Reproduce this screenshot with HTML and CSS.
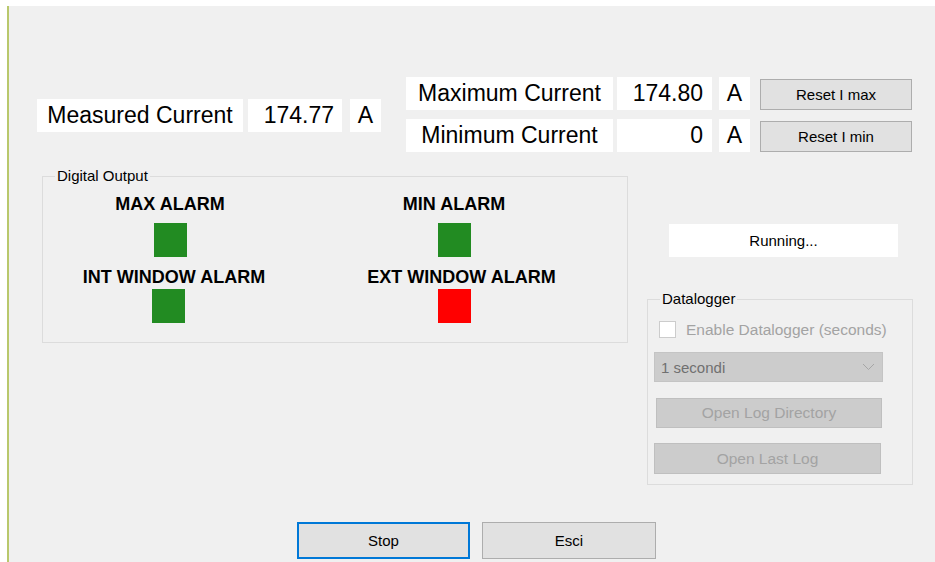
FILE: index.html
```html
<!DOCTYPE html>
<html lang="en">
<head>
<meta charset="utf-8">
<title>Current Monitor</title>
<link rel="stylesheet" href="styles.css">
</head>
<body>
<div class="window">
  <section class="readings">
    <div class="measured">
      <span class="cell label measured-label">Measured Current</span>
      <span class="cell value measured-value">174.77</span>
      <span class="cell unit">A</span>
    </div>
    <div class="extremes">
      <span class="cell label">Maximum Current</span>
      <span class="cell value ext-value">174.80</span>
      <span class="cell unit">A</span>
      <button class="btn reset" type="button">Reset I max</button>
      <span class="cell label">Minimum Current</span>
      <span class="cell value ext-value">0</span>
      <span class="cell unit">A</span>
      <button class="btn reset" type="button">Reset I min</button>
    </div>
  </section>

  <section class="middle">
    <div class="group outputs">
      <span class="group-title">Digital Output</span>
      <div class="alarm-grid">
        <div class="alarm upper">
          <span class="alarm-name">MAX ALARM</span>
          <span class="lamp on"></span>
        </div>
        <div class="alarm upper">
          <span class="alarm-name">MIN ALARM</span>
          <span class="lamp on"></span>
        </div>
        <div class="alarm lower">
          <span class="alarm-name shift-int">INT WINDOW ALARM</span>
          <span class="lamp on nudge-left"></span>
        </div>
        <div class="alarm lower">
          <span class="alarm-name shift-ext">EXT WINDOW ALARM</span>
          <span class="lamp fault"></span>
        </div>
      </div>
    </div>

    <div class="side">
      <div class="status">Running...</div>
      <div class="group logger">
        <span class="group-title">Datalogger</span>
        <label class="check-row">
          <span class="checkbox"></span>
          <span class="check-text">Enable Datalogger (seconds)</span>
        </label>
        <div class="combo">
          <span>1 secondi</span>
          <svg class="chevron" width="13" height="8" viewBox="0 0 13 8"><polyline points="1,1 6.5,6.5 12,1" fill="none" stroke="#a6a6a6" stroke-width="1"/></svg>
        </div>
        <button class="btn disabled log-dir" type="button">Open Log Directory</button>
        <button class="btn disabled log-last" type="button">Open Last Log</button>
      </div>
    </div>
  </section>

  <footer class="actions">
    <button class="btn primary" type="button">Stop</button>
    <button class="btn exit" type="button">Esci</button>
  </footer>
</div>
</body>
</html>
```

FILE: styles.css
```css
html, body {
  margin: 0;
  background: #ffffff;
  overflow: hidden;
}

body {
  font-family: "Liberation Sans", Arial, sans-serif;
  color: #000000;
}

.window {
  margin: 6px 0 0 7px;
  height: 556px;
  box-sizing: border-box;
  border-left: 2px solid #b9c86c;
  background: #f0f0f0;
  display: flex;
  flex-direction: column;
}

/* top row: measured value and min / max readings */
.readings {
  display: flex;
  align-items: center;
  margin-top: 71px;
}

.measured {
  display: flex;
  margin: 2px 0 0 28px;
}

.cell {
  display: block;
  box-sizing: border-box;
  height: 33px;
  line-height: 33px;
  font-size: 23px;
  background: #ffffff;
  white-space: nowrap;
}

.label {
  text-align: center;
}

.value {
  text-align: right;
}

.unit {
  width: 31px;
  text-align: center;
}

.measured-label {
  width: 206px;
}

.measured-value {
  width: 94px;
  margin-left: 5px;
  padding-right: 8px;
}

.measured .unit {
  margin-left: 8px;
}

.extremes {
  display: grid;
  grid-template-columns: 207px 99px 38px 162px;
  row-gap: 9px;
  margin-left: 25px;
}

.extremes .cell,
.extremes .btn {
  justify-self: end;
}

.extremes .label {
  width: 207px;
}

.ext-value {
  width: 95px;
  padding-right: 9px;
}

.btn {
  font-family: "Liberation Sans", Arial, sans-serif;
  font-size: 15px;
  color: #000000;
  background: #e1e1e1;
  border: 1px solid #adadad;
  padding: 0;
  margin: 0;
  box-sizing: border-box;
}

.reset {
  width: 152px;
  height: 31px;
  margin-top: 2px;
  align-self: start;
}

/* middle: digital outputs and datalogger */
.middle {
  display: flex;
  align-items: flex-start;
  margin-top: 24px;
}

.group {
  position: relative;
  box-sizing: border-box;
  border: 1px solid #dcdcdc;
}

.group-title {
  position: absolute;
  top: -10px;
  left: 12px;
  padding: 0 2px;
  font-size: 15px;
  line-height: 18px;
  background: #f0f0f0;
}

.outputs {
  width: 586px;
  margin-left: 33px;
  padding: 17px 0 19px 7px;
}

.alarm-grid {
  display: grid;
  grid-template-columns: 240px 240px;
  column-gap: 44px;
  row-gap: 10px;
}

.alarm {
  display: flex;
  flex-direction: column;
  align-items: center;
}

.alarm-name {
  font-size: 18px;
  font-weight: bold;
  line-height: 20px;
  white-space: nowrap;
}

.shift-int {
  margin-left: 8px;
}

.shift-ext {
  margin-left: 15px;
}

.lamp {
  display: block;
  width: 33px;
  height: 34px;
}

.upper .lamp {
  margin-top: 9px;
}

.lower .lamp {
  margin-top: 2px;
}

.nudge-left {
  margin-right: 4px;
}

.lamp.on {
  background: #228b22;
}

.lamp.fault {
  background: #ff0000;
}

.side {
  width: 266px;
  margin-left: 19px;
  display: flex;
  flex-direction: column;
}

.status {
  width: 229px;
  height: 33px;
  margin: 48px 0 0 22px;
  line-height: 33px;
  font-size: 15px;
  text-align: center;
  background: #ffffff;
}

.logger {
  height: 186px;
  margin-top: 42px;
  padding-top: 21px;
  display: flex;
  flex-direction: column;
  align-items: flex-start;
}

.check-row {
  display: flex;
  align-items: center;
  height: 17px;
  margin-left: 11px;
}

.checkbox {
  display: block;
  width: 17px;
  height: 17px;
  box-sizing: border-box;
  border: 1px solid #cccccc;
  background: #ffffff;
}

.check-text {
  margin-left: 10px;
  font-size: 15.5px;
  color: #a3a3a3;
  white-space: nowrap;
}

.combo {
  width: 229px;
  height: 30px;
  margin: 14px 0 0 6px;
  padding: 0 7px 0 6px;
  box-sizing: border-box;
  display: flex;
  align-items: center;
  justify-content: space-between;
  background: #cccccc;
  border: 1px solid #c4c4c4;
  font-size: 15px;
  color: #707070;
}

.btn.disabled {
  background: #cccccc;
  border-color: #bfbfbf;
  color: #a3a3a3;
  font-size: 15.5px;
}

.log-dir {
  width: 226px;
  height: 30px;
  margin: 16px 0 0 8px;
}

.log-last {
  width: 227px;
  height: 31px;
  margin: 15px 0 0 6px;
}

/* bottom command buttons */
.actions {
  display: flex;
  gap: 12px;
  margin: 37px 0 0 288px;
}

.actions .btn {
  height: 37px;
}

.primary {
  width: 173px;
  border: 2px solid #0078d7;
}

.exit {
  width: 174px;
}
```
